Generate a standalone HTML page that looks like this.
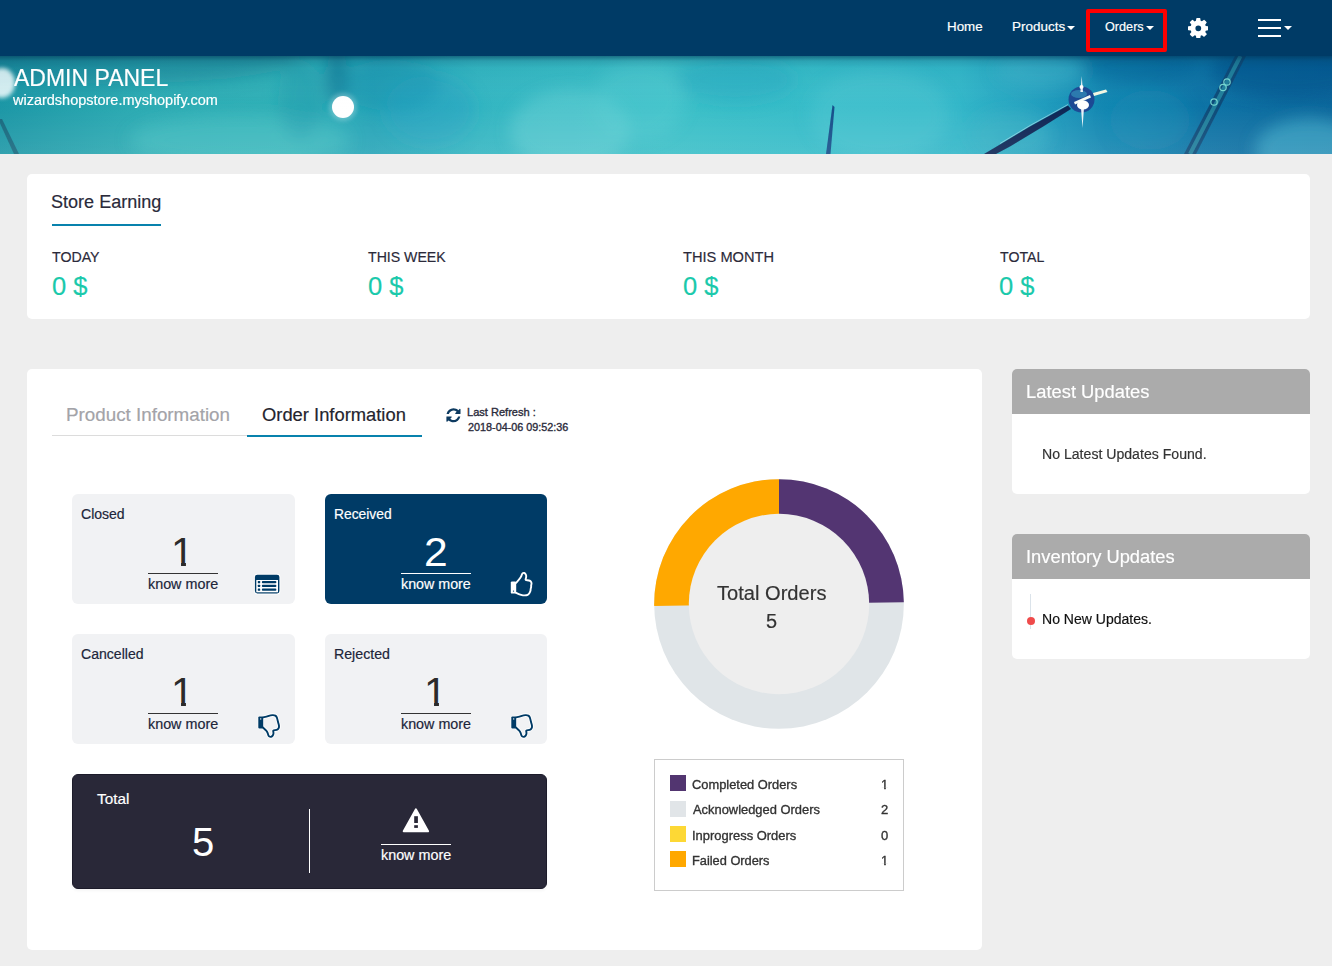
<!DOCTYPE html>
<html lang="en">
<head>
<meta charset="utf-8">
<title>Admin Panel</title>
<style>
*{box-sizing:border-box;margin:0;padding:0}
html,body{width:1332px;height:966px;overflow:hidden}
body{background:#eeeeee;font-family:"Liberation Sans",sans-serif;color:#222;position:relative}
.abs{position:absolute}
.t{position:absolute;white-space:nowrap;line-height:1;transform-origin:0 0}
#nav{left:0;top:0;width:1332px;height:56px;background:#003b66}
.caret{position:absolute;width:0;height:0;border-left:4px solid transparent;border-right:4px solid transparent;border-top:4px solid #fff}
#redbox{left:1086px;top:9px;width:81px;height:43px;border:4px solid #fe0000;border-radius:2px}
.bar{position:absolute;left:1258px;width:23px;height:2px;background:#fff}
#banner{left:0;top:56px;width:1332px;height:98px;overflow:hidden;background:#2fb3c2}
.card{position:absolute;background:#fff;border-radius:5px}
.box{position:absolute;height:110px;border-radius:6px;background:#f1f2f4}
.ln{position:absolute;height:1px}
.hdr{position:absolute;left:0;top:0;width:100%;height:45px;background:#ababab;border-radius:5px 5px 0 0}
.sw{position:absolute;left:670px;width:16px;height:16px}
</style>
</head>
<body>

<!-- NAVBAR -->
<div id="nav" class="abs">
  <div class="caret" style="left:1067px;top:26px"></div>
  <div id="redbox" class="abs"></div>
  <div class="caret" style="left:1146px;top:26px"></div>
  <svg class="abs" style="left:1187.500px;top:17.800px" width="20.600" height="20.600" viewBox="0 0 1536 1536"><path fill="#fff" fill-rule="evenodd" d="M983 768a215 215 0 1 0-430 0a215 215 0 1 0 430 0zM1536 659v222q0 12-8 23t-20 13l-185 28q-19 54-39 91 35 50 107 138 10 12 10 25t-9 23q-27 37-99 108t-94 71q-12 0-26-9l-138-108q-44 23-91 38-16 136-29 186-7 28-36 28h-222q-14 0-24.500-8.500t-11.500-21.500l-28-184q-49-16-90-37l-141 107q-10 9-25 9-14 0-25-11-126-114-165-168-7-10-7-23 0-12 8-23 15-21 51-66.500t54-70.500q-27-50-41-99l-183-27q-13-2-21-12.500t-8-23.500v-222q0-12 8-23t19-13l186-28q14-46 39-92-40-57-107-138-10-12-10-24 0-10 9-23 26-36 98.500-107.500t94.500-71.500q13 0 26 10l138 107q44-23 91-38 16-136 29-186 7-28 36-28h222q14 0 24.500 8.500t11.500 21.500l28 184q49 16 90 37l142-107q9-9 24-9 13 0 25 10 129 119 165 170 7 8 7 22 0 12-8 23-15 21-51 66.500t-54 70.500q26 50 41 98l183 28q13 2 21 12.500t8 23.500z"/></svg>
  <div class="bar" style="top:19px"></div>
  <div class="bar" style="top:27px"></div>
  <div class="bar" style="top:35px"></div>
  <div class="caret" style="left:1284px;top:26px"></div>
</div>
<div class="t" id="home" style="left:947px;top:20.00px;font-size:13px;color:#fff;transform:scaleX(1.0260);-webkit-text-stroke:0.18px #fff;">Home</div>
<div class="t" id="products" style="left:1012px;top:20.00px;font-size:13px;color:#fff;transform:scaleX(1.0354);-webkit-text-stroke:0.18px #fff;">Products</div>
<div class="t" id="orders" style="left:1105px;top:20.00px;font-size:13px;color:#fff;transform:scaleX(0.9733);-webkit-text-stroke:0.18px #fff;">Orders</div>

<!-- BANNER -->
<div id="banner" class="abs">
<svg class="abs" style="left:0;top:0" width="1332" height="98" viewBox="0 56 1332 98" preserveAspectRatio="none">
    <defs>
      <linearGradient id="bg" x1="0" y1="0" x2="1332" y2="0" gradientUnits="userSpaceOnUse">
        <stop offset="0" stop-color="#1c97a6"/>
        <stop offset="0.11" stop-color="#2dacb4"/>
        <stop offset="0.22" stop-color="#31b1b8"/>
        <stop offset="0.28" stop-color="#27a5b8"/>
        <stop offset="0.36" stop-color="#34b6c2"/>
        <stop offset="0.50" stop-color="#3cc0c8"/>
        <stop offset="0.62" stop-color="#36bcc9"/>
        <stop offset="0.72" stop-color="#33b7c9"/>
        <stop offset="0.78" stop-color="#239fbf"/>
        <stop offset="0.83" stop-color="#1387b2"/>
        <stop offset="0.90" stop-color="#0e74a6"/>
        <stop offset="1" stop-color="#0c679c"/>
      </linearGradient>
      <linearGradient id="vg" x1="0" y1="56" x2="0" y2="154" gradientUnits="userSpaceOnUse">
        <stop offset="0" stop-color="#003050" stop-opacity="0.55"/>
        <stop offset="0.05" stop-color="#003050" stop-opacity="0.18"/>
        <stop offset="0.12" stop-color="#004060" stop-opacity="0.05"/>
        <stop offset="0.5" stop-color="#ffffff" stop-opacity="0"/>
        <stop offset="1" stop-color="#ffffff" stop-opacity="0.10"/>
      </linearGradient>
      <filter id="bl8" x="-50%" y="-50%" width="200%" height="200%"><feGaussianBlur stdDeviation="8"/></filter>
      <filter id="bl3" x="-50%" y="-50%" width="200%" height="200%"><feGaussianBlur stdDeviation="2"/></filter>
      <filter id="bl1" x="-50%" y="-50%" width="200%" height="200%"><feGaussianBlur stdDeviation="0.7"/></filter>
    </defs>
    <rect x="0" y="56" width="1332" height="98" fill="url(#bg)"/>
    <!-- soft light / dark blobs -->
    <g filter="url(#bl8)">
      <ellipse cx="570" cy="130" rx="60" ry="40" fill="#6fd3d6" opacity="0.45"/>
      <ellipse cx="880" cy="115" rx="70" ry="45" fill="#5ccbd4" opacity="0.35"/>
      <ellipse cx="240" cy="140" rx="110" ry="25" fill="#4cc4c6" opacity="0.45"/>
      <ellipse cx="390" cy="85" rx="50" ry="25" fill="#1a93b0" opacity="0.45"/>
      <ellipse cx="735" cy="80" rx="60" ry="22" fill="#28a6c0" opacity="0.45"/>
      <ellipse cx="1310" cy="150" rx="55" ry="32" fill="#49b6cf" opacity="0.55"/>
      <ellipse cx="1040" cy="70" rx="45" ry="18" fill="#45b9cc" opacity="0.45"/>
      <ellipse cx="1010" cy="135" rx="40" ry="25" fill="#3db3c6" opacity="0.4"/>
      <ellipse cx="1290" cy="70" rx="80" ry="28" fill="#08528c" opacity="0.6"/>
      <ellipse cx="1140" cy="66" rx="60" ry="18" fill="#0a5c94" opacity="0.4"/>
      <ellipse cx="110" cy="58" rx="190" ry="26" fill="#127a90" opacity="0.45"/>
      <ellipse cx="337" cy="75" rx="10" ry="30" fill="#0f7896" opacity="0.7"/>
      <ellipse cx="300" cy="100" rx="22" ry="40" fill="#1b93a8" opacity="0.35"/>
      <ellipse cx="430" cy="110" rx="45" ry="35" fill="#249fc4" opacity="0.4"/>
      <ellipse cx="640" cy="100" rx="45" ry="40" fill="#5fd0d6" opacity="0.3"/>
      <ellipse cx="1150" cy="120" rx="40" ry="30" fill="#1590b8" opacity="0.35"/>
    </g>
    <!-- left dandelion -->
    <ellipse cx="2" cy="83" rx="13" ry="15" fill="#e4f6f8" opacity="0.92" filter="url(#bl3)"/>
    <path d="M-2 119 L2 119 L19 154 L14 154 Z" fill="#17697f" filter="url(#bl1)"/>
    <!-- bokeh dot -->
    <circle cx="343" cy="107" r="11" fill="#ffffff" filter="url(#bl1)"/>
    <circle cx="343" cy="107" r="14" fill="#ffffff" opacity="0.25" filter="url(#bl3)"/>
    <!-- small blade -->
    <path d="M832.500 105 L834.500 107 L830.500 154 L826 154 Z" fill="#154f8a" filter="url(#bl1)"/>
    <!-- stalk with drop -->
    <path d="M984 154 L1000 144.500 L1030 126.500 L1068 105.500 L1071 109 L1044 126 L1010 146.500 L996 154 Z" fill="#0b2755" filter="url(#bl1)"/>
    <path d="M1000 143.500 L1030 125.500 L1068 104.500" stroke="#bfe6ee" stroke-width="0.8" fill="none" opacity="0.7"/>
    <circle cx="1081.500" cy="99.500" r="13" fill="#1a4a94" filter="url(#bl1)"/>
    <ellipse cx="1079" cy="94" rx="8" ry="4" fill="#2f86b5" opacity="0.8" filter="url(#bl1)"/>
    <path d="M1074 102 L1090 95 L1091 97.500 L1075 104.500 Z" fill="#f4fbf6" filter="url(#bl1)"/>
    <path d="M1093 93 L1106 89.500 L1107.500 92 L1094 96 Z" fill="#f3f8e4" filter="url(#bl1)"/>
    <ellipse cx="1083" cy="105" rx="6" ry="4.500" fill="#ffffff" filter="url(#bl1)"/>
    <path d="M1081.700 76 L1083 92 L1080.400 92 Z M1082.500 128 L1084 108 L1081 108 Z" fill="#ffffff" opacity="0.9"/>
    <circle cx="1081.500" cy="87" r="2" fill="#fff" filter="url(#bl1)"/>
    <!-- right stalk -->
    <path d="M1235 56 L1246 56 L1196 154 L1184 154 Z" fill="#0e4877" opacity="0.95" filter="url(#bl1)"/>
    <path d="M1240.500 56 L1190 154" stroke="#23849f" stroke-width="4" fill="none" opacity="0.9" filter="url(#bl1)"/>
    <g fill="none" stroke="#7fe0d6" stroke-width="1.200" opacity="0.9">
      <circle cx="1227" cy="82" r="3.200"/><circle cx="1223" cy="87.500" r="3.200"/><circle cx="1214" cy="102" r="3.200"/>
    </g>
    <rect x="0" y="56" width="1332" height="98" fill="url(#vg)"/>
  </svg>
</div>
<div class="t" id="admin" style="left:14px;top:66.93px;font-size:23px;color:#fff;-webkit-text-stroke:0.18px #fff;">ADMIN PANEL</div>
<div class="t" id="shop" style="left:13px;top:92.75px;font-size:14px;color:#fff;transform:scaleX(1.0342);-webkit-text-stroke:0.18px #fff;">wizardshopstore.myshopify.com</div>

<!-- STORE EARNING -->
<div class="card" style="left:27px;top:174px;width:1283px;height:145px"></div>
<div class="abs" style="left:52px;top:224px;width:109px;height:2px;background:#0882ad"></div>
<div class="t" id="store" style="left:51px;top:192.56px;font-size:18px;color:#2a2a3a;transform:scaleX(1.0031);-webkit-text-stroke:0.18px #2a2a3a;">Store Earning</div>
<div class="t" id="today" style="left:52px;top:249.40px;font-size:15px;color:#2b2a3a;transform:scaleX(0.9463);-webkit-text-stroke:0.18px #2b2a3a;">TODAY</div>
<div class="t" id="week" style="left:368px;top:249.40px;font-size:15px;color:#2b2a3a;transform:scaleX(0.9419);-webkit-text-stroke:0.18px #2b2a3a;">THIS WEEK</div>
<div class="t" id="month" style="left:683px;top:249.40px;font-size:15px;color:#2b2a3a;transform:scaleX(0.9756);-webkit-text-stroke:0.18px #2b2a3a;">THIS MONTH</div>
<div class="t" id="total" style="left:1000px;top:249.40px;font-size:15px;color:#2b2a3a;transform:scaleX(0.9438);-webkit-text-stroke:0.18px #2b2a3a;">TOTAL</div>
<div class="t" id="a1" style="left:52px;top:272.69px;font-size:26px;color:#1ac9ab;transform:scaleX(0.9849);-webkit-text-stroke:0.18px #1ac9ab;">0 $</div>
<div class="t" id="a2" style="left:368px;top:272.69px;font-size:26px;color:#1ac9ab;transform:scaleX(0.9849);-webkit-text-stroke:0.18px #1ac9ab;">0 $</div>
<div class="t" id="a3" style="left:683px;top:272.69px;font-size:26px;color:#1ac9ab;transform:scaleX(0.9843);-webkit-text-stroke:0.18px #1ac9ab;">0 $</div>
<div class="t" id="a4" style="left:999px;top:272.69px;font-size:26px;color:#1ac9ab;transform:scaleX(0.9847);-webkit-text-stroke:0.18px #1ac9ab;">0 $</div>

<!-- MAIN CARD -->
<div class="card" style="left:27px;top:369px;width:955px;height:581px"></div>
<div class="abs" style="left:52px;top:435px;width:195px;height:1px;background:#dcdcdc"></div>
<div class="abs" style="left:247px;top:435px;width:175px;height:2px;background:#0882ad"></div>
<div class="t" id="tab1" style="left:66px;top:405.56px;font-size:18px;color:#a3a3a8;transform:scaleX(1.0442);-webkit-text-stroke:0.18px #a3a3a8;">Product Information</div>
<div class="t" id="tab2" style="left:262px;top:405.56px;font-size:18px;color:#24242e;transform:scaleX(1.0199);-webkit-text-stroke:0.18px #24242e;">Order Information</div>
<div class="t" id="lr1" style="left:467px;top:407.09px;font-size:11px;color:#2b2b3b;transform:scaleX(1.0048);-webkit-text-stroke:0.35px #2b2b3b;">Last Refresh :</div>
<div class="t" id="lr2" style="left:468px;top:422.09px;font-size:11px;color:#2b2b3b;transform:scaleX(0.9821);-webkit-text-stroke:0.35px #2b2b3b;">2018-04-06 09:52:36</div>

<div class="box" style="left:72px;top:494px;width:222.800px"></div>
<div class="box" style="left:325px;top:494px;width:222px;background:#003b66"></div>
<div class="box" style="left:72px;top:634px;width:222.800px"></div>
<div class="box" style="left:325px;top:634px;width:222px"></div>
<div class="abs" style="left:72px;top:774px;width:475px;height:115.400px;border-radius:6px;background:#292838;border:1px solid #1c1b2a;box-shadow:0 2px 3px rgba(0,0,0,0.04)"></div>
<div class="ln" style="left:148px;top:573px;width:70px;background:#333"></div>
<div class="ln" style="left:401px;top:573px;width:70px;background:#fff"></div>
<div class="ln" style="left:148px;top:713px;width:70px;background:#333"></div>
<div class="ln" style="left:401px;top:713px;width:70px;background:#333"></div>
<div class="ln" style="left:381px;top:844px;width:70px;background:#fff"></div>
<div class="abs" style="left:309px;top:809px;width:1px;height:64px;background:#fff"></div>
<div class="t" id="closed" style="left:81px;top:506.75px;font-size:14px;color:#20253a;transform:scaleX(1.0022);-webkit-text-stroke:0.18px #20253a;">Closed</div>
<div class="t" id="received" style="left:334px;top:506.75px;font-size:14px;color:#fff;transform:scaleX(0.9875);-webkit-text-stroke:0.18px #fff;">Received</div>
<div class="t" id="cancelled" style="left:81px;top:646.75px;font-size:14px;color:#20253a;transform:scaleX(1.0045);-webkit-text-stroke:0.18px #20253a;">Cancelled</div>
<div class="t" id="rejected" style="left:334px;top:646.75px;font-size:14px;color:#20253a;transform:scaleX(1.0124);-webkit-text-stroke:0.18px #20253a;">Rejected</div>
<div class="t" id="n1" style="left:171px;top:531.89px;font-size:41px;color:#2b2b2b;clip-path:polygon(0 0,100% 0,100% 73.500%,65.500% 73.500%,65.500% 100%,44% 100%,44% 73.500%,0 73.500%);">1</div>
<div class="t" id="n2" style="left:424px;top:531.89px;font-size:41px;color:#fff;transform:scaleX(1.0395);">2</div>
<div class="t" id="n3" style="left:171px;top:671.89px;font-size:41px;color:#2b2b2b;clip-path:polygon(0 0,100% 0,100% 73.500%,65.500% 73.500%,65.500% 100%,44% 100%,44% 73.500%,0 73.500%);">1</div>
<div class="t" id="n4" style="left:424px;top:671.89px;font-size:41px;color:#2b2b2b;clip-path:polygon(0 0,100% 0,100% 73.500%,65.500% 73.500%,65.500% 100%,44% 100%,44% 73.500%,0 73.500%);">1</div>
<div class="t" id="km1" style="left:148px;top:576.85px;font-size:14px;color:#20253a;transform:scaleX(1.0242);-webkit-text-stroke:0.18px #20253a;">know more</div>
<div class="t" id="km2" style="left:401px;top:576.85px;font-size:14px;color:#fff;transform:scaleX(1.0195);-webkit-text-stroke:0.18px #fff;">know more</div>
<div class="t" id="km3" style="left:148px;top:716.85px;font-size:14px;color:#20253a;transform:scaleX(1.0242);-webkit-text-stroke:0.18px #20253a;">know more</div>
<div class="t" id="km4" style="left:401px;top:716.85px;font-size:14px;color:#20253a;transform:scaleX(1.0228);-webkit-text-stroke:0.18px #20253a;">know more</div>
<div class="t" id="ttl" style="left:97px;top:792.25px;font-size:14px;color:#fff;transform:scaleX(1.0922);-webkit-text-stroke:0.18px #fff;">Total</div>
<div class="t" id="n5" style="left:192px;top:821.89px;font-size:41px;color:#fff;transform:scaleX(0.9767);">5</div>
<div class="t" id="km5" style="left:381px;top:847.85px;font-size:14px;color:#fff;transform:scaleX(1.0244);-webkit-text-stroke:0.18px #fff;">know more</div>

<!-- ICONS -->
<svg class="abs" style="left:0;top:0;pointer-events:none" width="1332" height="966" viewBox="0 0 1332 966">
  <!-- refresh -->
  <g transform="translate(446.4,408.2) scale(0.0092)"><path fill="#0d3a60" d="M1511 928q0 5-1 7-64 268-268 434.500t-478 166.500q-146 0-282.500-55t-243.500-157l-129 129q-19 19-45 19t-45-19-19-45v-448q0-26 19-45t45-19h448q26 0 45 19t19 45-19 45l-137 137q71 66 161 102t187 36q134 0 250-65t186-179q11-17 53-117 8-23 30-23h192q13 0 22.500 9.500t9.500 22.500zm25-800v448q0 26-19 45t-45 19h-448q-26 0-45-19t-19-45 19-45l138-138q-148-137-349-137-134 0-250 65t-186 179q-11 17-53 117-8 23-30 23h-199q-13 0-22.500-9.500t-9.500-22.500v-7q65-268 270-434.500t480-166.500q146 0 284 55.500t245 156.500l130-129q19-19 45-19t45 19 19 45z"/></g>
  <!-- list-alt (Closed) -->
  <g>
    <rect x="254" y="573.800" width="26.300" height="20.600" rx="3.200" fill="#ffffff"/>
    <rect x="254.900" y="574.700" width="24.500" height="18.800" rx="2.400" fill="#003b66"/>
    <rect x="256.300" y="580" width="21.700" height="12.300" fill="#ffffff"/>
    <g fill="#003b66">
      <rect x="257.800" y="581" width="2.400" height="2.200" rx="0.500"/><rect x="261.900" y="581" width="14.400" height="2.200" rx="0.800"/>
      <rect x="257.800" y="584.800" width="2.400" height="2.200" rx="0.500"/><rect x="261.900" y="584.800" width="14.400" height="2.200" rx="0.800"/>
      <rect x="257.800" y="588.600" width="2.400" height="2.200" rx="0.500"/><rect x="261.900" y="588.600" width="14.400" height="2.200" rx="0.800"/>
    </g>
  </g>
  <!-- thumbs up (Received) -->
  <g>
    <rect x="510.800" y="581.400" width="5.400" height="12.200" rx="1.200" fill="#ffffff"/>
    <circle cx="513.500" cy="591.100" r="0.700" fill="#003b66"/>
    <path d="M516.17 582.79 Q519.32 579.41 520.34 577.84 Q521.35 576.26 521.69 575.02 Q522.03 573.78 522.70 573.22 Q523.38 572.66 524.28 573.00 Q525.18 573.33 525.74 574.35 Q526.31 575.36 526.19 576.71 Q526.08 578.06 525.63 579.08 Q525.18 580.09 527.21 580.20 Q529.23 580.32 530.14 580.88 Q531.04 581.44 531.37 582.45 Q531.71 583.47 531.37 584.37 Q531.04 585.27 531.15 586.17 Q531.26 587.07 530.92 587.97 Q530.59 588.87 530.59 589.77 Q530.59 590.68 530.14 591.58 Q529.68 592.48 529.23 593.38 Q528.78 594.28 527.66 594.84 Q526.53 595.41 524.73 595.41 Q522.93 595.41 521.13 594.84 Q519.32 594.28 517.75 593.60 L516.17 592.93" fill="none" stroke="#ffffff" stroke-width="1.900" stroke-linejoin="round" stroke-linecap="round"/>
  </g>
  <!-- thumbs down (Cancelled) -->
  <g>
    <path d="M262.97 717.39 Q267.03 716.49 268.83 715.88 Q270.63 715.27 272.43 715.14 Q274.23 715.00 275.36 715.63 Q276.49 716.26 276.94 717.84 Q277.39 719.41 277.84 721.22 Q278.29 723.02 278.74 724.59 Q279.19 726.17 278.96 727.30 Q278.74 728.42 277.84 729.21 Q276.94 730.00 274.91 730.11 Q272.88 730.23 273.22 731.35 Q273.56 732.48 273.45 733.60 Q273.33 734.73 272.66 735.63 Q271.98 736.53 271.08 736.76 Q270.18 736.98 269.39 736.53 Q268.60 736.08 268.27 734.95 Q267.93 733.83 267.48 732.70 Q267.03 731.58 266.01 730.45 Q265.00 729.32 263.99 728.42 L262.97 727.52" fill="none" stroke="#ffffff" stroke-width="3.600" stroke-linejoin="round" stroke-linecap="round"/>
    <rect x="257.700" y="715.900" width="6" height="13.200" rx="1.400" fill="#ffffff"/>
    <rect x="258.300" y="716.500" width="4.900" height="12" rx="1" fill="#003b66"/>
    <circle cx="260.700" cy="718.900" r="0.700" fill="#ffffff"/>
    <path d="M262.97 717.39 Q267.03 716.49 268.83 715.88 Q270.63 715.27 272.43 715.14 Q274.23 715.00 275.36 715.63 Q276.49 716.26 276.94 717.84 Q277.39 719.41 277.84 721.22 Q278.29 723.02 278.74 724.59 Q279.19 726.17 278.96 727.30 Q278.74 728.42 277.84 729.21 Q276.94 730.00 274.91 730.11 Q272.88 730.23 273.22 731.35 Q273.56 732.48 273.45 733.60 Q273.33 734.73 272.66 735.63 Q271.98 736.53 271.08 736.76 Q270.18 736.98 269.39 736.53 Q268.60 736.08 268.27 734.95 Q267.93 733.83 267.48 732.70 Q267.03 731.58 266.01 730.45 Q265.00 729.32 263.99 728.42 L262.97 727.52" fill="none" stroke="#003b66" stroke-width="1.900" stroke-linejoin="round" stroke-linecap="round"/>
  </g>
  <!-- thumbs down (Rejected) -->
  <g>
    <path d="M515.97 717.39 Q520.03 716.49 521.83 715.88 Q523.63 715.27 525.43 715.14 Q527.23 715.00 528.36 715.63 Q529.49 716.26 529.94 717.84 Q530.39 719.41 530.84 721.22 Q531.29 723.02 531.74 724.59 Q532.19 726.17 531.96 727.30 Q531.74 728.42 530.84 729.21 Q529.94 730.00 527.91 730.11 Q525.88 730.23 526.22 731.35 Q526.56 732.48 526.45 733.60 Q526.33 734.73 525.66 735.63 Q524.98 736.53 524.08 736.76 Q523.18 736.98 522.39 736.53 Q521.60 736.08 521.27 734.95 Q520.93 733.83 520.48 732.70 Q520.03 731.58 519.01 730.45 Q518.00 729.32 516.99 728.42 L515.97 727.52" fill="none" stroke="#ffffff" stroke-width="3.600" stroke-linejoin="round" stroke-linecap="round"/>
    <rect x="510.700" y="715.900" width="6" height="13.200" rx="1.400" fill="#ffffff"/>
    <rect x="511.300" y="716.500" width="4.900" height="12" rx="1" fill="#003b66"/>
    <circle cx="513.700" cy="718.900" r="0.700" fill="#ffffff"/>
    <path d="M515.97 717.39 Q520.03 716.49 521.83 715.88 Q523.63 715.27 525.43 715.14 Q527.23 715.00 528.36 715.63 Q529.49 716.26 529.94 717.84 Q530.39 719.41 530.84 721.22 Q531.29 723.02 531.74 724.59 Q532.19 726.17 531.96 727.30 Q531.74 728.42 530.84 729.21 Q529.94 730.00 527.91 730.11 Q525.88 730.23 526.22 731.35 Q526.56 732.48 526.45 733.60 Q526.33 734.73 525.66 735.63 Q524.98 736.53 524.08 736.76 Q523.18 736.98 522.39 736.53 Q521.60 736.08 521.27 734.95 Q520.93 733.83 520.48 732.70 Q520.03 731.58 519.01 730.45 Q518.00 729.32 516.99 728.42 L515.97 727.52" fill="none" stroke="#003b66" stroke-width="1.900" stroke-linejoin="round" stroke-linecap="round"/>
  </g>
  <!-- warning triangle -->
  <g>
    <path d="M415.900 809.500 L428 831.200 L403.800 831.200 Z" fill="#ffffff" stroke="#ffffff" stroke-width="2.200" stroke-linejoin="round"/>
    <rect x="414.200" y="816.200" width="3.700" height="6.800" fill="#282736"/>
    <rect x="414.200" y="825.200" width="3.700" height="2.700" fill="#282736"/>
  </g>
</svg>

<!-- DONUT -->
<svg class="abs" style="left:649px;top:473.900px" width="260" height="260" viewBox="-130 -130 260 260">
  <circle r="124.85" fill="#e0e5e8"/>
  <path d="M0 0 L0 -124.85 A124.85 124.85 0 0 1 124.84 -1.63 Z" fill="#533572"/>
  <path d="M0 0 L-124.83 1.96 A124.85 124.85 0 0 1 0 -124.85 Z" fill="#ffa800"/>
  <circle r="90.2" fill="#eeeeee"/>
</svg>
<div class="t" id="to" style="left:717px;top:582.87px;font-size:20px;color:#333;transform:scaleX(1.0047);-webkit-text-stroke:0.18px #333;">Total Orders</div>
<div class="t" id="to5" style="left:766px;top:610.77px;font-size:20px;color:#333;transform:scaleX(0.9975);-webkit-text-stroke:0.18px #333;">5</div>

<!-- LEGEND -->
<div class="abs" style="left:654px;top:759px;width:250px;height:132px;border:1px solid #cccccc;background:#fff"></div>
<div class="sw" style="top:775px;background:#523570"></div>
<div class="sw" style="top:800.500px;background:#e1e5e8"></div>
<div class="sw" style="top:826px;background:#fdd835"></div>
<div class="sw" style="top:851px;background:#ffa800"></div>
<div class="t" id="l1" style="left:692px;top:777.80px;font-size:13px;color:#333;transform:scaleX(0.9894);-webkit-text-stroke:0.35px #333;">Completed Orders</div>
<div class="t" id="l2" style="left:693px;top:803.00px;font-size:13px;color:#333;transform:scaleX(0.9921);-webkit-text-stroke:0.35px #333;">Acknowledged Orders</div>
<div class="t" id="l3" style="left:692px;top:828.50px;font-size:13px;color:#333;transform:scaleX(0.9948);-webkit-text-stroke:0.35px #333;">Inprogress Orders</div>
<div class="t" id="l4" style="left:692px;top:853.80px;font-size:13px;color:#333;transform:scaleX(0.9840);-webkit-text-stroke:0.35px #333;">Failed Orders</div>
<div class="t" id="ln1" style="left:881px;top:777.80px;font-size:13px;color:#333;-webkit-text-stroke:0.35px #333;clip-path:polygon(0 0,100% 0,100% 73.500%,65.500% 73.500%,65.500% 100%,44% 100%,44% 73.500%,0 73.500%);">1</div>
<div class="t" id="ln2" style="left:881px;top:803.00px;font-size:13px;color:#333;-webkit-text-stroke:0.35px #333;">2</div>
<div class="t" id="ln3" style="left:881px;top:828.50px;font-size:13px;color:#333;-webkit-text-stroke:0.35px #333;">0</div>
<div class="t" id="ln4" style="left:881px;top:853.80px;font-size:13px;color:#333;-webkit-text-stroke:0.35px #333;clip-path:polygon(0 0,100% 0,100% 73.500%,65.500% 73.500%,65.500% 100%,44% 100%,44% 73.500%,0 73.500%);">1</div>

<!-- RIGHT COLUMN -->
<div class="card" style="left:1012px;top:369px;width:298px;height:125px"><div class="hdr"></div></div>
<div class="card" style="left:1012px;top:534px;width:298px;height:125px"><div class="hdr"></div>
  <div class="abs" style="left:18px;top:60px;width:1px;height:35px;background:#dbe3ea"></div>
  <div class="abs" style="left:15px;top:83px;width:8px;height:8px;border-radius:50%;background:#ef4b4b"></div>
</div>
<div class="t" id="lu" style="left:1026px;top:382.96px;font-size:18px;color:#fff;transform:scaleX(1.0197);-webkit-text-stroke:0.18px #fff;">Latest Updates</div>
<div class="t" id="nlu" style="left:1042px;top:447.15px;font-size:14px;color:#333;transform:scaleX(1.0070);-webkit-text-stroke:0.18px #333;">No Latest Updates Found.</div>
<div class="t" id="iu" style="left:1026px;top:547.96px;font-size:18px;color:#fff;transform:scaleX(1.0178);-webkit-text-stroke:0.18px #fff;">Inventory Updates</div>
<div class="t" id="nnu" style="left:1042px;top:612.15px;font-size:14px;color:#111;transform:scaleX(1.0022);-webkit-text-stroke:0.18px #111;">No New Updates.</div>

</body>
</html>
